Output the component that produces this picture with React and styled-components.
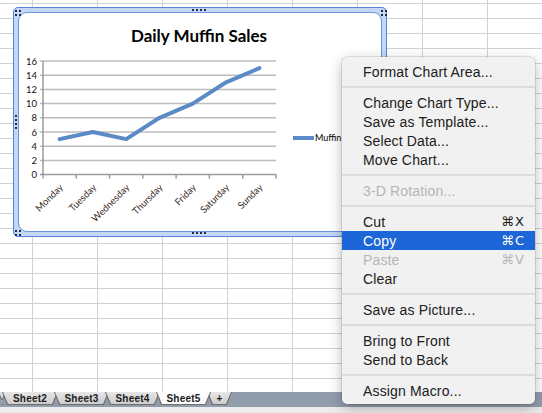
import React from 'react'
import styled, { createGlobalStyle } from 'styled-components'

const GlobalStyle = createGlobalStyle`
    html, body {
        margin: 0;
        padding: 0;
        background: #ffffff;
    }
`

const Page = styled.div`
    width: 542px;
    height: 413px;
    position: relative;
    overflow: hidden;
    display: flex;
    flex-direction: column;
    font-family: "Liberation Sans", Arial, sans-serif;
`

const Sheet = styled.div`
    flex: 1;
    position: relative;
    background-color: #ffffff;
    background-image:
        linear-gradient(to right, #d2d2d2 1px, transparent 1px),
        linear-gradient(to bottom, #d2d2d2 1px, transparent 1px);
    background-size: 65px 15px;
    background-position: 32px 3px;
`

const TabBar = styled.div`
    height: 15px;
    background: #929dac;
    display: flex;
    align-items: flex-start;
`

const StatusStrip = styled.div`
    height: 6px;
    background: #ececec;
`

const Tab = styled.div`
    width: ${p => p.$width || 55}px;
    height: 13px;
    margin-left: ${p => p.$first ? -2 : -4}px;
    padding: 0 1px 1px 1px;
    box-sizing: border-box;
    background: #6e6e6e;
    clip-path: polygon(0 0, 100% 0, calc(100% - 5px) 100%, 5px 100%);
    position: relative;
    z-index: ${p => p.$active ? 2 : 1};
`

const TabFace = styled.div`
    height: 100%;
    display: flex;
    align-items: center;
    justify-content: center;
    clip-path: polygon(0 0, 100% 0, calc(100% - 5px) 100%, 5px 100%);
    background: ${p => p.$active ? '#fbfbfb' : 'linear-gradient(#e6e6e6, #cdcdcd)'};
    font-size: 10px;
    font-weight: bold;
    color: #1b1b1b;
    letter-spacing: 0.2px;
`

const ChartFrame = styled.div`
    position: absolute;
    left: 13px;
    top: 7px;
    width: 374px;
    height: 230px;
    box-sizing: border-box;
    border: 1px solid #5a7fdc;
    border-radius: 5px;
    background: #c4d8f5;
    padding: 4px;
`

const ChartInner = styled.div`
    width: 100%;
    height: 100%;
    box-sizing: border-box;
    background: #ffffff;
    border: 1px solid #6c91e0;
    border-radius: 9px;
    overflow: hidden;
`

const Handle = styled.div`
    position: absolute;
    left: ${p => p.$x}px;
    top: ${p => p.$y}px;
    display: grid;
    grid-template-columns: repeat(${p => p.$cols}, 2px);
    gap: 2px;
`

const Dot = styled.span`
    width: 2px;
    height: 2px;
    background: #1f2b45;
`

const Menu = styled.div`
    position: absolute;
    left: 342px;
    top: 57px;
    width: 193px;
    box-sizing: border-box;
    padding: 5px 0 4px;
    background: #f1f1f1;
    border-radius: 5px;
    box-shadow: 0 0 0 0.5px rgba(0, 0, 0, 0.18), 0 4px 14px rgba(0, 0, 0, 0.28);
    z-index: 5;
`

const MenuItem = styled.div`
    height: 19px;
    display: flex;
    align-items: center;
    justify-content: space-between;
    padding: 0 10px 0 21px;
    font-size: 14px;
    letter-spacing: 0.15px;
    color: ${p => p.$disabled ? '#b5b5b5' : p.$active ? '#ffffff' : '#202020'};
    background: ${p => p.$active ? '#1c66d7' : 'transparent'};
`

const Shortcut = styled.span`
    font-family: "DejaVu Sans", "Liberation Sans", sans-serif;
    font-size: 13px;
    letter-spacing: 1px;
`

const Separator = styled.div`
    height: 12px;
    background: linear-gradient(#dcdcdc, #dcdcdc) center / 100% 2px no-repeat;
`

const days = ['Monday', 'Tuesday', 'Wednesday', 'Thursday', 'Friday', 'Saturday', 'Sunday']
const values = [5, 6, 5, 8, 10, 13, 15]

const plot = { left: 43, right: 276, top: 61, bottom: 174.6 }
const yFor = v => plot.bottom - v * (plot.bottom - plot.top) / 16
const step = (plot.right - plot.left) / 7
const xFor = i => plot.left + step * (i + 0.5)
const chartFont = "Lato, 'Liberation Sans', sans-serif"

function Chart() {
    const points = values.map((v, i) => `${xFor(i).toFixed(1)},${yFor(v).toFixed(1)}`).join(' ')
    return (
        <svg width="362" height="218" viewBox="19 13 362 218" style={{ display: 'block' }}>
            <text x="199" y="42" textAnchor="middle" fontFamily={chartFont} fontWeight="bold" fontSize="17" fill="#000">Daily Muffin Sales</text>
            {[0, 2, 4, 6, 8, 10, 12, 14, 16].map(v => (
                <g key={v}>
                    <line x1={plot.left - 3} x2={plot.right} y1={yFor(v)} y2={yFor(v)} stroke={v === 0 ? '#9a9a9a' : '#bdbdbd'} strokeWidth="1.5" />
                    <text x="37" y={yFor(v) + 3.5} textAnchor="end" fontFamily={chartFont} fontSize="9.5" fill="#111">{v}</text>
                </g>
            ))}
            <line x1={plot.left} x2={plot.left} y1={plot.top} y2={plot.bottom + 4} stroke="#9a9a9a" strokeWidth="1.5" />
            {days.map((d, i) => {
                const ax = xFor(i) + 4
                const ay = 188
                return (
                    <g key={d}>
                        <line x1={plot.left + step * (i + 1)} x2={plot.left + step * (i + 1)} y1={plot.bottom} y2={plot.bottom + 4} stroke="#9a9a9a" strokeWidth="1.5" />
                        <text
                            x={ax}
                            y={ay}
                            textAnchor="end"
                            transform={`rotate(-45 ${ax} ${ay})`}
                            fontFamily={chartFont}
                            fontSize="9.5"
                            fill="#3a2c28"
                        >{d}</text>
                    </g>
                )
            })}
            <polyline points={points} fill="none" stroke="#5b8bc7" strokeWidth="4" strokeLinejoin="round" strokeLinecap="round" />
            <line x1="293" x2="314" y1="138" y2="138" stroke="#5b8bc7" strokeWidth="4" />
            <text x="315" y="141" fontFamily={chartFont} fontSize="9" fill="#000">Muffin</text>
        </svg>
    )
}

function Dots({ n }) {
    return Array.from({ length: n }).map((_, i) => <Dot key={i} />)
}

const menu = [
    { label: 'Format Chart Area...' },
    'sep',
    { label: 'Change Chart Type...' },
    { label: 'Save as Template...' },
    { label: 'Select Data...' },
    { label: 'Move Chart...' },
    'sep',
    { label: '3-D Rotation...', disabled: true },
    'sep',
    { label: 'Cut', key: '⌘X' },
    { label: 'Copy', key: '⌘C', active: true },
    { label: 'Paste', key: '⌘V', disabled: true },
    { label: 'Clear' },
    'sep',
    { label: 'Save as Picture...' },
    'sep',
    { label: 'Bring to Front' },
    { label: 'Send to Back' },
    'sep',
    { label: 'Assign Macro...' },
]

const tabs = [
    { name: '', width: 8, first: true },
    { name: 'Sheet2', width: 56 },
    { name: 'Sheet3', width: 55 },
    { name: 'Sheet4', width: 55 },
    { name: 'Sheet5', width: 55, active: true },
    { name: '+', width: 25 },
]

export default function App() {
    return (
        <Page>
            <GlobalStyle />
            <Sheet>
                <ChartFrame>
                    <ChartInner>
                        <Chart />
                    </ChartInner>
                </ChartFrame>
                <Handle $x={15} $y={10} $cols={2}><Dots n={4} /></Handle>
                <Handle $x={381} $y={10} $cols={2}><Dots n={4} /></Handle>
                <Handle $x={15} $y={230} $cols={2}><Dots n={4} /></Handle>
                <Handle $x={192} $y={9} $cols={4}><Dots n={4} /></Handle>
                <Handle $x={192} $y={232} $cols={4}><Dots n={4} /></Handle>
                <Handle $x={15} $y={115} $cols={1}><Dots n={4} /></Handle>
                <Menu>
                    {menu.map((m, i) => m === 'sep'
                        ? <Separator key={i} />
                        : (
                            <MenuItem key={i} $disabled={m.disabled} $active={m.active}>
                                <span>{m.label}</span>
                                {m.key && <Shortcut>{m.key}</Shortcut>}
                            </MenuItem>
                        ))}
                </Menu>
            </Sheet>
            <TabBar>
                {tabs.map((t, i) => (
                    <Tab key={i} $width={t.width} $first={t.first} $active={t.active}>
                        <TabFace $active={t.active}>{t.name}</TabFace>
                    </Tab>
                ))}
            </TabBar>
            <StatusStrip />
        </Page>
    )
}
